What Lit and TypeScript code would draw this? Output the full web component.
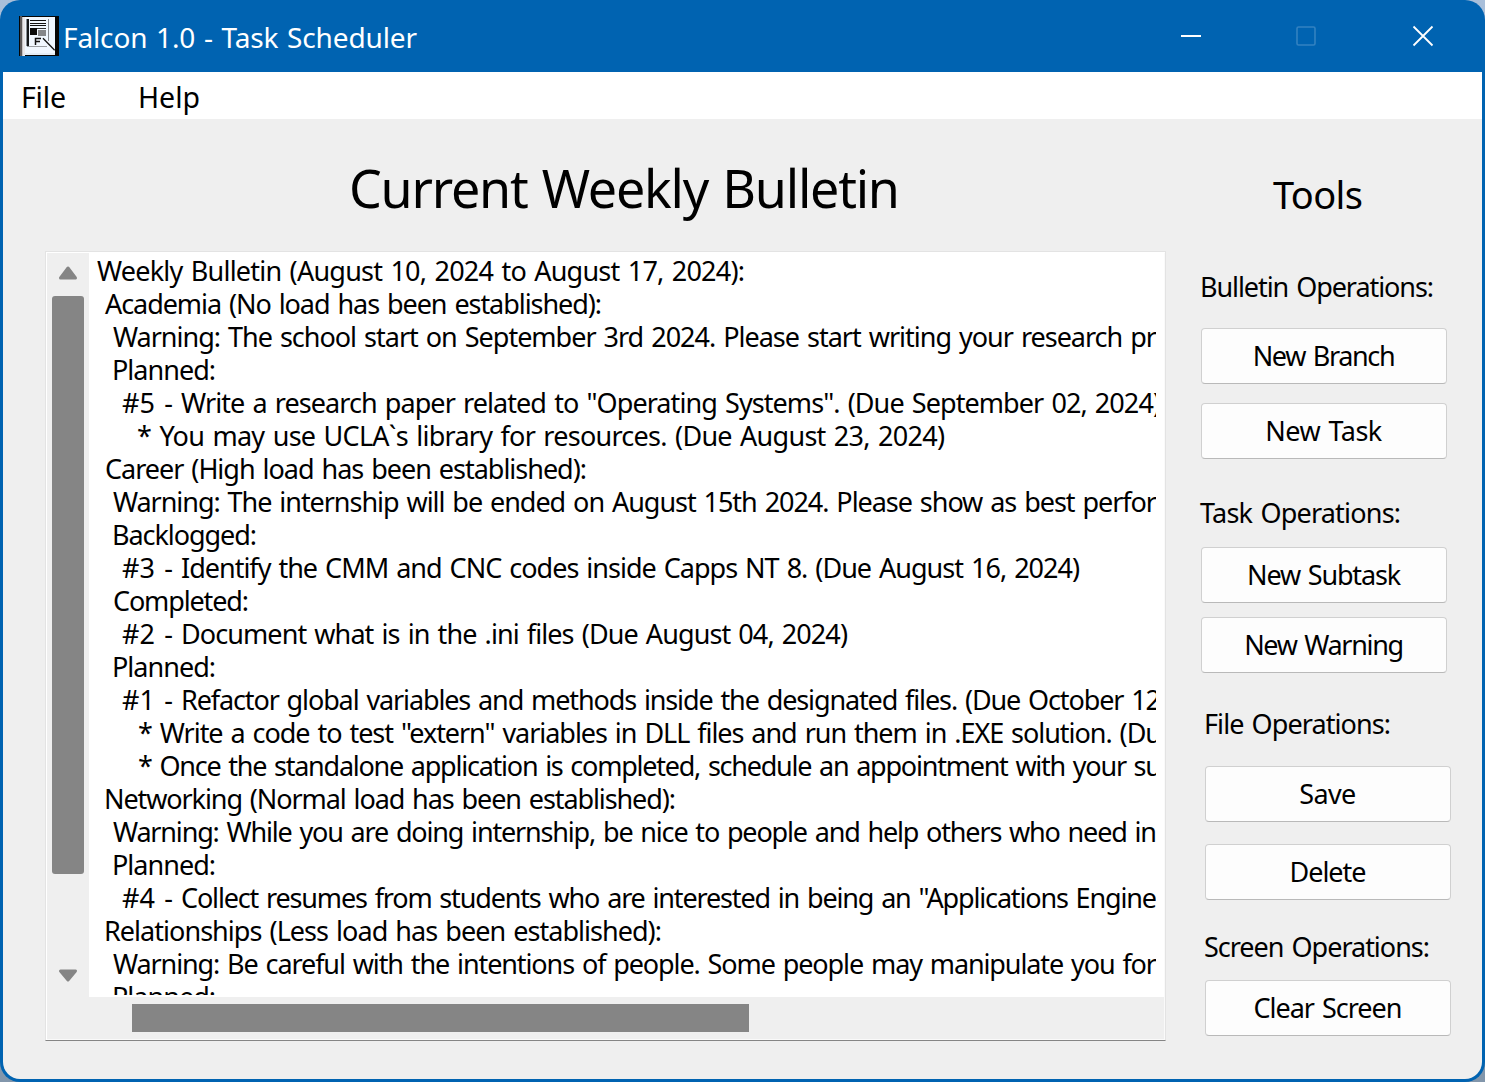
import { LitElement, html, css, svg } from "lit";
import { customElement, property } from "lit/decorators.js";

/** Single line of text whose tracking is adjusted so that it spans `span` pixels. */
@customElement("fit-text")
class FitText extends LitElement {
  @property({ type: Number }) span = 0;
  @property() text = "";
  static styles = css`
    :host { display: block; white-space: pre; }
    .t { display: inline-block; }
  `;
  updated() {
    const el = this.renderRoot.querySelector(".t") as HTMLElement;
    el.style.letterSpacing = "0px";
    const natural = el.getBoundingClientRect().width;
    const gaps = Math.max(1, this.text.length - 1);
    el.style.letterSpacing = `${(this.span - natural) / gaps}px`;
  }
  render() {
    return html`<span class="t">${this.text}</span>`;
  }
}

/* indent, width, text, optional task number marker */
const LINES: [number, number, string, string?][] = [
  [0, 648, "Weekly Bulletin (August 10, 2024 to August 17, 2024):"],
  [8, 497, "Academia (No load has been established):"],
  [16, 1044, "Warning: The school start on September 3rd 2024. Please start writing your research pr"],
  [15, 104, "Planned:"],
  [25, 980, "Write a research paper related to \"Operating Systems\". (Due September 02, 2024)", "#5 -"],
  [40, 808, "* You may use UCLA`s library for resources. (Due August 23, 2024)"],
  [8, 482, "Career (High load has been established):"],
  [16, 1044, "Warning: The internship will be ended on August 15th 2024. Please show as best perfor"],
  [15, 145, "Backlogged:"],
  [25, 899, "Identify the CMM and CNC codes inside Capps NT 8. (Due August 16, 2024)", "#3 -"],
  [16, 136, "Completed:"],
  [25, 667, "Document what is in the .ini files (Due August 04, 2024)", "#2 -"],
  [15, 104, "Planned:"],
  [25, 980, "Refactor global variables and methods inside the designated files. (Due October 12", "#1 -"],
  [41, 1024, "* Write a code to test \"extern\" variables in DLL files and run them in .EXE solution. (Du"],
  [41, 1024, "* Once the standalone application is completed, schedule an appointment with your su"],
  [7, 572, "Networking (Normal load has been established):"],
  [16, 1044, "Warning: While you are doing internship, be nice to people and help others who need in"],
  [15, 104, "Planned:"],
  [25, 976, "Collect resumes from students who are interested in being an \"Applications Engine", "#4 -"],
  [7, 558, "Relationships (Less load has been established):"],
  [16, 1044, "Warning: Be careful with the intentions of people. Some people may manipulate you for"],
  [15, 104, "Planned:"],
];

const appIcon = svg`
  <svg class="appicon" viewBox="0 0 120 120" shape-rendering="crispEdges">
    <rect width="120" height="120" fill="#050505"/>
    <rect x="4" y="0" width="4" height="120" fill="#5c5858"/>
    <rect x="8" y="3" width="10" height="117" fill="#c4c2c4"/>
    <rect x="12" y="3" width="6" height="117" fill="#e9e7e9"/>
    <rect x="18" y="3" width="90" height="108" fill="#f0f7ff"/>
    <rect x="18" y="111" width="90" height="6" fill="#e4edf6"/>
    <rect x="21" y="9" width="4" height="82" fill="#8b8f94"/>
    <rect x="25" y="9" width="4" height="82" fill="#15171a"/>
    <rect x="25" y="89" width="60" height="3" fill="#9a9ea3"/>
    <rect x="86" y="9" width="3" height="66" fill="#85898e"/>
    <rect x="33" y="12" width="48" height="3" fill="#111"/>
    <rect x="33" y="21" width="48" height="3" fill="#111"/>
    <rect x="33" y="27" width="48" height="3" fill="#111"/>
    <rect x="33" y="36" width="21" height="21" fill="#0a0a0a"/>
    <rect x="57" y="42" width="24" height="18" fill="#85878a"/>
    <rect x="54" y="36" width="27" height="3" fill="#333"/>
    <path d="M49.5 87V67.5H66M48 76.5H63" fill="none" stroke="#111" stroke-width="4.5" shape-rendering="auto"/>
    <path d="M72 67L107 103" fill="none" stroke="#151515" stroke-width="4" shape-rendering="auto"/>
  </svg>`;

@customElement("app-root")
class AppRoot extends LitElement {
  static styles = css`
    :host {
      display: block; width: 1485px; height: 1082px; overflow: hidden;
      background: linear-gradient(#a9bfda, #8296ab);
      font-family: "Noto Sans", "Open Sans", sans-serif; color: #000;
    }
    * { box-sizing: border-box; }
    .window {
      width: 1485px; height: 1082px; background: #0063b1; border-radius: 20px;
      padding: 0 3px 3px; display: flex; flex-direction: column; overflow: hidden;
    }
    .titlebar { height: 72px; flex: none; display: flex; align-items: center; padding-left: 16px; }
    .appicon { width: 40px; height: 40px; display: block; }
    .caption { color: #fff; font-size: 28px; line-height: 40px; margin: 1px 0 0 4px; flex: 1; word-spacing: 1.5px; }
    .controls { display: flex; align-items: center; gap: 95px; padding-right: 48px; }
    .controls svg { width: 22px; height: 22px; display: block; }
    .controls svg:first-child { margin-right: -2px; }
    .client {
      flex: 1; min-height: 0; display: flex; flex-direction: column;
      background: #efefef; border-radius: 0 0 17px 17px; overflow: hidden;
    }
    .menu { height: 47px; flex: none; background: #fff; display: flex; font-size: 28.5px; line-height: 51px; padding-left: 18px; }
    .m1 { width: 117px; }
    .content { display: flex; padding-left: 42px; }
    .left { width: 1121px; display: flex; flex-direction: column; }
    .h1 { font-size: 52px; line-height: 64px; margin: 37px 0 0 304px; height: 95px; word-spacing: 2px; }
    .box {
      height: 790px; border: 1px solid #e3e3e3; border-bottom: 1px solid #858585;
      box-shadow: inset 1px 1px #fff, inset -1px -1px #fafafa;
      padding: 1px; display: flex; flex-direction: column; background: #efefef;
    }
    .upper { height: 744px; display: flex; }
    .vbar { width: 42px; flex: none; display: flex; flex-direction: column; align-items: center; padding-top: 12px; }
    .vbar svg { width: 20px; height: 16px; display: block; flex: none; }
    .vthumb { width: 32px; height: 578px; flex: none; border-radius: 3px; background: #858585; margin: 15px 0 94px; }
    .paper { flex: 1; min-width: 0; background: #fff; padding: 1px 8px 2px 8px; }
    .lines { height: 741px; overflow: hidden; font-size: 27px; line-height: 33px; word-spacing: 2px; }
    .line { height: 33px; display: flex; }
    .line fit-text { flex: none; }
    .mark { width: 59px; }
    .hbar { flex: 1; padding: 7px 0 0 85px; }
    .hthumb { width: 617px; height: 28px; background: #858585; }
    .right { padding-left: 34px; width: 300px; font-size: 27px; }
    .h2 { font-size: 38px; line-height: 50px; margin: 50px 0 52px 73px; }
    .group { display: flex; flex-direction: column; }
    .shift { padding-left: 4px; }
    .label { height: 34px; line-height: 32px; word-spacing: 2px; }
    .btn {
      width: 246px; height: 56px; background: #fdfdfd; border: 1px solid #d0d0d0; border-bottom-color: #b9b9b9;
      border-radius: 4px; display: flex; justify-content: center; font: inherit; padding: 0 1px 2px 0;
      margin-left: 1px; align-items: center; color: #000; word-spacing: 2px;
    }
  `;

  private group(name: string, labelW: number, top: number, gap1: number, gap2: number, buttons: [string, number][], shift = false) {
    return html`<section class="group ${shift ? "shift" : ""}" style="padding-top:${top}px">
      <fit-text class="label" .span=${labelW} .text=${name}></fit-text>
      ${buttons.map(([t, w], i) => html`<button class="btn" style="margin-top:${i ? gap2 : gap1}px">
        <fit-text .span=${w} .text=${t}></fit-text></button>`)}
    </section>`;
  }

  render() {
    return html`<div class="window">
      <header class="titlebar">
        ${appIcon}
        <fit-text class="caption" .span=${354} .text=${"Falcon 1.0 - Task Scheduler"}></fit-text>
        <div class="controls">
          <svg viewBox="0 0 22 22"><rect x="1" y="10" width="20" height="2" fill="#fff"/></svg>
          <svg viewBox="0 0 22 22"><rect x="2" y="2" width="18" height="18" rx="1.5" fill="none" stroke="#3382c1" stroke-width="1.6"/></svg>
          <svg viewBox="0 0 22 22"><path d="M1.5 1.5L20.5 20.5M20.5 1.5L1.5 20.5" stroke="#fff" stroke-width="1.8"/></svg>
        </div>
      </header>
      <div class="client">
        <nav class="menu">
          <fit-text class="m1" .span=${45} .text=${"File"}></fit-text>
          <fit-text .span=${62} .text=${"Help"}></fit-text>
        </nav>
        <main class="content">
          <div class="left">
            <fit-text class="h1" .span=${551} .text=${"Current Weekly Bulletin"}></fit-text>
            <div class="box">
              <div class="upper">
                <div class="vbar">
                  <svg viewBox="0 0 20 16"><path d="M10 3L17.5 13H2.5Z" fill="#858585" stroke="#858585" stroke-width="3" stroke-linejoin="round"/></svg>
                  <div class="vthumb"></div>
                  <svg viewBox="0 0 20 16"><path d="M10 12L17.5 3H2.5Z" fill="#858585" stroke="#858585" stroke-width="3" stroke-linejoin="round"/></svg>
                </div>
                <div class="paper"><div class="lines">
                  ${LINES.map(([pad, w, t, mark]) => html`<div class="line" style="padding-left:${pad}px">
                    ${mark ? html`<fit-text class="mark" .span=${51} .text=${mark}></fit-text>` : ""}
                    <fit-text .span=${w} .text=${t}></fit-text>
                  </div>`)}
                </div></div>
              </div>
              <div class="hbar"><div class="hthumb"></div></div>
            </div>
          </div>
          <aside class="right">
            <fit-text class="h2" .span=${90} .text=${"Tools"}></fit-text>
            ${this.group("Bulletin Operations:", 234, 0, 23, 19, [["New Branch", 143], ["New Task", 117]])}
            ${this.group("Task Operations:", 201, 38, 16, 14, [["New Subtask", 154], ["New Warning", 160]])}
            ${this.group("File Operations:", 187, 35, 24, 22, [["Save", 57], ["Delete", 77]], true)}
            ${this.group("Screen Operations:", 226, 31, 15, 0, [["Clear Screen", 149]], true)}
          </aside>
        </main>
      </div>
    </div>`;
  }
}
